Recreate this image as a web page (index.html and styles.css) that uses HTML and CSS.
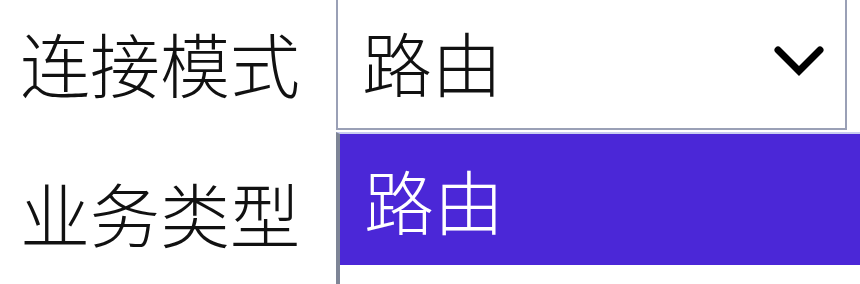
FILE: index.html
```html
<!DOCTYPE html>
<html lang="zh-CN">
<head>
<meta charset="utf-8">
<title>连接模式</title>
<link rel="stylesheet" href="styles.css">
</head>
<body>
<div class="form">
  <div class="row row-first">
    <span class="label">连接模式</span>
    <div class="select-wrap">
      <div class="select">
        <span class="value">路由</span>
        <svg class="chevron" width="52" height="34" viewBox="0 0 52 34"><polyline points="5,6 26,27 47,6" fill="none" stroke="#000" stroke-width="7" stroke-linecap="round" stroke-linejoin="miter"/></svg>
      </div>
      <ul class="dropdown">
        <li class="option selected">路由</li>
        <li class="option blank"></li>
      </ul>
    </div>
  </div>
  <div class="row row-second">
    <span class="label">业务类型</span>
  </div>
</div>
</body>
</html>
```
FILE: styles.css
```css
html, body {
  margin: 0;
  padding: 0;
  overflow: hidden;
  background: #ffffff;
  width: 860px;
  height: 284px;
}
.form {
  font-family: "Noto Sans CJK SC", "Noto Sans", sans-serif;
  font-weight: 300;
  color: #111111;
  font-size: 70px;
  margin-top: -4px;
}
.row {
  display: flex;
  align-items: center;
}
.label {
  width: 316px;
  padding-left: 20px;
  line-height: 100px;
  flex-shrink: 0;
}
.select-wrap {
  position: relative;
  width: 511px;
}
.select {
  box-sizing: border-box;
  height: 134px;
  border: 2px solid #9aa0b6;
  background: #ffffff;
  display: flex;
  align-items: center;
  justify-content: space-between;
  padding-left: 24px;
  padding-right: 20px;
}
.value {
  line-height: 1;
  padding-bottom: 2px;
}
.chevron {
  display: block;
  margin-top: -4px;
}
.dropdown {
  position: absolute;
  top: calc(100% + 2px);
  left: 0;
  width: 520px;
  margin: 0;
  padding: 0;
  list-style: none;
  border-left: 4px solid #7e8596;
  border-top: 2px solid #c9cdf0;
  background: #ffffff;
}
.option {
  height: 131px;
  display: flex;
  align-items: center;
  padding-left: 24px;
  line-height: 1;
}
.selected {
  background: #4b27d7;
  color: #ffffff;
}
.blank {
  height: 20px;
}
.row-second {
  margin-top: 33px;
}
```
